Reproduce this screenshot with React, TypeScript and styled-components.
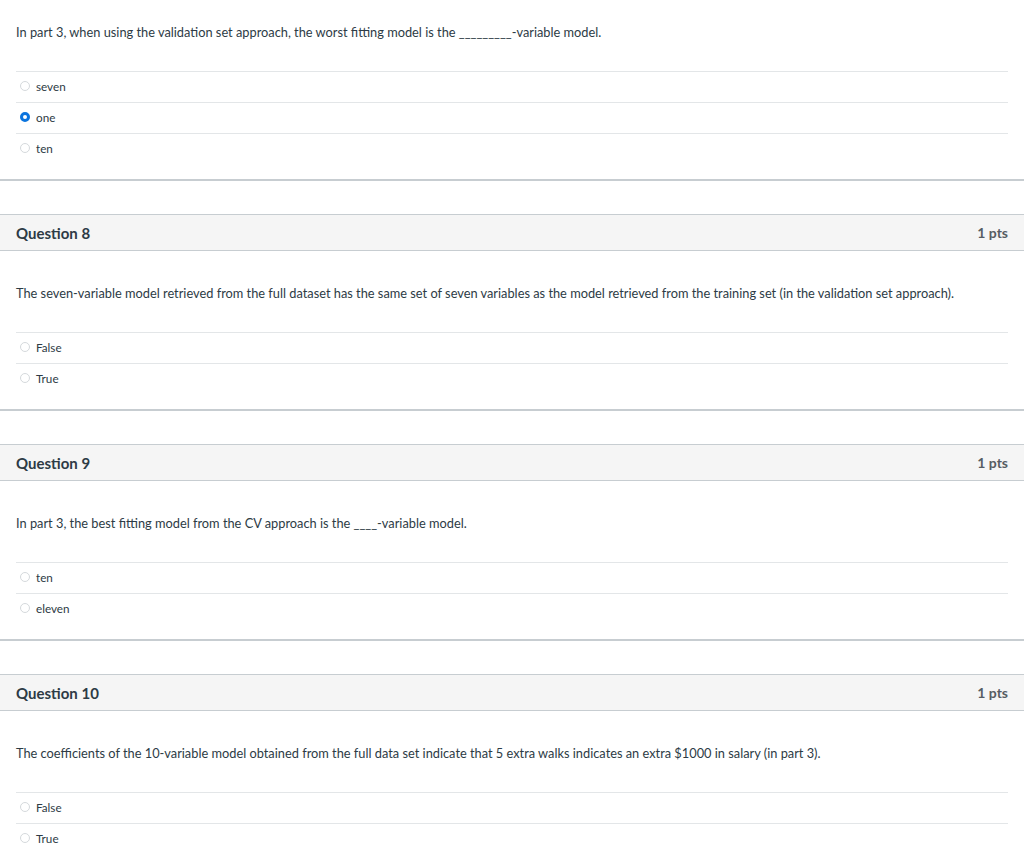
import styled, { createGlobalStyle } from "styled-components";

const GlobalStyle = createGlobalStyle`
  html, body {
    margin: 0;
    padding: 0;
    background: #ffffff;
    font-family: Lato, "Open Sans", "Liberation Sans", sans-serif;
    color: #2d3b45;
  }
`;

interface Question {
  number?: number;
  points?: number;
  text: string;
  answers: string[];
  selected?: number;
}

const questions: Question[] = [
  {
    text: "In part 3, when using the validation set approach, the worst fitting model is the _________-variable model.",
    answers: ["seven", "one", "ten"],
    selected: 1,
  },
  {
    number: 8,
    points: 1,
    text: "The seven-variable model retrieved from the full dataset has the same set of seven variables as the model retrieved from the training set (in the validation set approach).",
    answers: ["False", "True"],
  },
  {
    number: 9,
    points: 1,
    text: "In part 3, the best fitting model from the CV approach is the ____-variable model.",
    answers: ["ten", "eleven"],
  },
  {
    number: 10,
    points: 1,
    text: "The coefficients of the 10-variable model obtained from the full data set indicate that 5 extra walks indicates an extra $1000 in salary (in part 3).",
    answers: ["False", "True"],
  },
];

// page is scrolled a little, so the first question's header is out of view
const Page = styled.div`
  margin-top: -10px;
  display: flex;
  flex-direction: column;
  gap: 33px;
`;

const QuestionBox = styled.section<{ $last?: boolean }>`
  border-bottom: ${(p) => (p.$last ? "none" : "2px solid #c7cdd1")};
`;

const Header = styled.header`
  display: flex;
  justify-content: space-between;
  align-items: center;
  height: 35px;
  padding: 0 16px;
  background: #f5f5f5;
  border-top: 1px solid #c7cdd1;
  border-bottom: 1px solid #c7cdd1;
`;

const Title = styled.h2`
  margin: 0;
  font-size: 15px;
  font-weight: 700;
  color: #2d3b45;
`;

const Points = styled.span`
  font-size: 14px;
  font-weight: 700;
  color: #555d63;
`;

const Body = styled.div`
  padding: 33px 16px 15px;
`;

const Text = styled.p`
  margin: 0 0 30px;
  font-size: 12.8px;
  line-height: 18px;
`;

const AnswerList = styled.div`
  display: flex;
  flex-direction: column;
`;

const Answer = styled.label`
  display: flex;
  align-items: center;
  gap: 6px;
  height: 31px;
  box-sizing: border-box;
  border-top: 1px solid #e3e6e8;
  padding: 0 0 3px 4px;
  font-size: 11.7px;
  color: #2d3b45;
`;

const Radio = styled.span<{ $checked?: boolean }>`
  box-sizing: border-box;
  width: 10px;
  height: 10px;
  border-radius: 50%;
  flex-shrink: 0;
  border: ${(p) => (p.$checked ? "3px solid #0b74de" : "1px solid #d5d9dc")};
  background: #ffffff;
`;

export default function App() {
  return (
    <>
      <GlobalStyle />
      <Page>
        {questions.map((q, qi) => (
          <QuestionBox key={qi} $last={qi === questions.length - 1}>
            {q.number && (
              <Header>
                <Title>Question {q.number}</Title>
                <Points>{q.points} pts</Points>
              </Header>
            )}
            <Body>
              <Text>{q.text}</Text>
              <AnswerList>
                {q.answers.map((a, ai) => (
                  <Answer key={ai}>
                    <Radio $checked={q.selected === ai} />
                    {a}
                  </Answer>
                ))}
              </AnswerList>
            </Body>
          </QuestionBox>
        ))}
      </Page>
    </>
  );
}
